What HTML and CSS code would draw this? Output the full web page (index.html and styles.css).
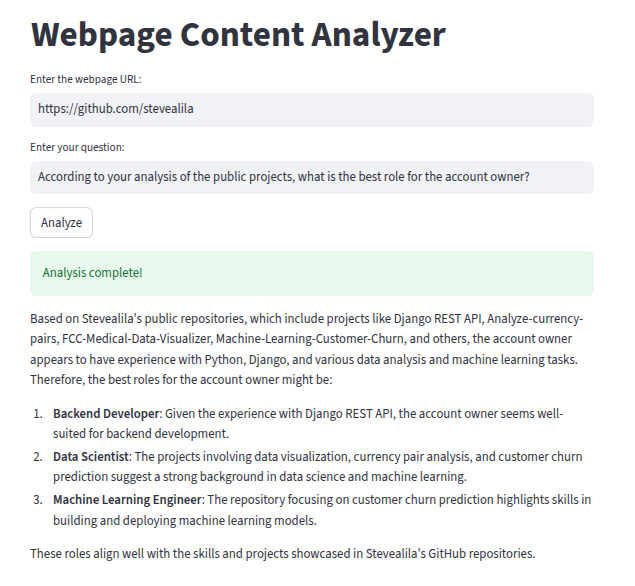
FILE: index.html
```html
<!DOCTYPE html>
<html>
<head>
<meta charset="utf-8">
<link rel="stylesheet" href="styles.css">
</head>
<body>
<main class="main">
  <h1 class="title">Webpage Content Analyzer</h1>
  <div class="field">
    <label class="label">Enter the webpage URL:</label>
    <div class="input">https://github.com/stevealila</div>
  </div>
  <div class="field">
    <label class="label">Enter your question:</label>
    <div class="input">According to your analysis of the public projects, what is the best role for the account owner?</div>
  </div>
  <div class="btn-row"><button class="btn">Analyze</button></div>
  <div class="alert">Analysis complete!</div>
  <div class="md">
    <p>Based on Stevealila's public repositories, which include projects like Django REST API, Analyze-currency-pairs, FCC-Medical-Data-Visualizer, Machine-Learning-Customer-Churn, and others, the account owner appears to have experience with Python, Django, and various data analysis and machine learning tasks. Therefore, the best roles for the account owner might be:</p>
    <ol>
      <li><strong>Backend Developer</strong>: Given the experience with Django REST API, the account owner seems well-suited for backend development.</li>
      <li><strong>Data Scientist</strong>: The projects involving data visualization, currency pair analysis, and customer churn prediction suggest a strong background in data science and machine learning.</li>
      <li><strong>Machine Learning Engineer</strong>: The repository focusing on customer churn prediction highlights skills in building and deploying machine learning models.</li>
    </ol>
    <p>These roles align well with the skills and projects showcased in Stevealila's GitHub repositories.</p>
  </div>
</main>
</body>
</html>
```
FILE: styles.css
```css
* { box-sizing: border-box; }
html, body { margin: 0; padding: 0; background: #fff; }
body {
  font-family: "Source Sans Pro", "Source Sans 3", "Lato", sans-serif;
  color: #31333f;
  font-size: 12.8px;
  line-height: 1.6;
}
.main {
  width: 564px;
  margin-left: 30px;
  padding-top: 14.4px;
}
.title {
  margin: 0 0 0 1px;
  font-size: 35.2px;
  font-weight: 700;
  line-height: 42.24px;
  color: #31333f;
}
.field { margin-top: 14.8px; }
.field + .field { margin-top: 12.8px; }
.label {
  display: block;
  font-size: 11.2px;
  line-height: 17.92px;
  margin-bottom: 4px;
}
.input {
  background: #f0f2f6;
  border-radius: 6.4px;
  height: 33.2px;
  line-height: 33.2px;
  padding: 0 8px;
  font-size: 12.8px;
  white-space: nowrap;
  overflow: hidden;
}
.btn-row { margin-top: 13px; display: flex; }
.btn {
  font-family: inherit;
  font-size: 12.8px;
  color: #31333f;
  background: #fff;
  border: 1px solid rgba(49,51,63,0.2);
  border-radius: 6.4px;
  height: 30.4px;
  padding: 0 10px 0 10px;
  line-height: 28px;
}
.alert {
  margin-top: 13px;
  background: #e8f9ee;
  color: #177233;
  border-radius: 6.4px;
  height: 45px;
  line-height: 45px;
  padding: 0 12.8px;
}
.md { margin-top: 13px; }
.md p { margin: 0 0 12.8px; }
.md ol { margin: 0 0 12.8px; padding-left: 0; }
.md li { margin: 0.2em 0 0.2em 1.2em; padding-left: 0.6em; }
.md strong { font-weight: 600; }
```
